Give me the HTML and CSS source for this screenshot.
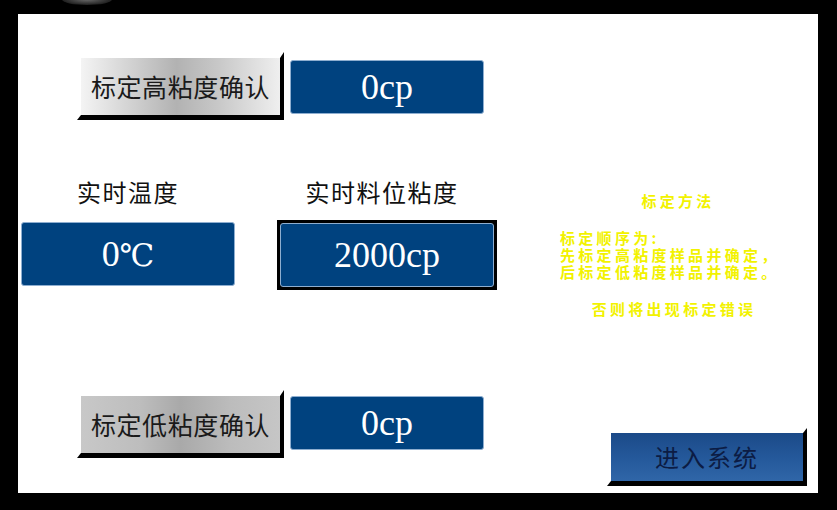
FILE: index.html
```html
<!DOCTYPE html>
<html lang="zh-CN">
<head>
<meta charset="utf-8">
<title>粘度标定</title>
<link rel="stylesheet" href="styles.css">
</head>
<body>
<div class="screen">
  <div class="glare"></div>
  <div class="panel">
    <div class="row row-top">
      <div class="bevel-btn gray-hi"><span>标定高粘度确认</span></div>
      <div class="value-box small-box">0cp</div>
    </div>
    <div class="row row-mid">
      <div class="col col-temp">
        <div class="label">实时温度</div>
        <div class="value-box temp-box">0<span class="unit">℃</span></div>
      </div>
      <div class="col col-level">
        <div class="label label-level">实时料位粘度</div>
        <div class="frame"><div class="value-box level-box">2000cp</div></div>
      </div>
      <div class="notes">
        <div class="note-title">标定方法</div>
        <div class="note-lines">
          <div class="note-line">标定顺序为:</div>
          <div class="note-line">先标定高粘度样品并确定，</div>
          <div class="note-line">后标定低粘度样品并确定。</div>
        </div>
        <div class="note-warn">否则将出现标定错误</div>
      </div>
    </div>
    <div class="row row-bottom">
      <div class="bevel-btn gray-lo"><span>标定低粘度确认</span></div>
      <div class="value-box small-box box-low">0cp</div>
      <div class="bevel-btn enter-btn"><span>进入系统</span></div>
    </div>
  </div>
</div>
</body>
</html>
```
FILE: styles.css
```css
html, body {
  margin: 0;
  padding: 0;
  background: #000;
}
.screen {
  position: relative;
  width: 837px;
  height: 510px;
  background: #000;
  padding: 14px 19px 17px 18px;
  box-sizing: border-box;
  overflow: hidden;
}
.glare {
  position: absolute;
  left: 62px;
  top: -6px;
  width: 50px;
  height: 11px;
  border-radius: 50%;
  background: radial-gradient(ellipse at center, #6a6a6a 0%, #2a2a2a 60%, rgba(0,0,0,0) 100%);
}
.panel {
  width: 800px;
  height: 479px;
  background: #fff;
  display: flex;
  flex-direction: column;
  font-family: "Noto Sans CJK SC", "Noto Sans", sans-serif;
}
.row {
  display: flex;
  align-items: flex-start;
}
.row-top {
  margin-top: 38px;
  padding-left: 59px;
}
.bevel-btn {
  box-sizing: border-box;
  border-style: solid;
  border-width: 6px 4px 5px 4px;
  border-color: transparent #000 #000 transparent;
  background-clip: padding-box;
  display: flex;
  align-items: center;
  justify-content: center;
  width: 207px;
  height: 68px;
  color: #1a1a1a;
  font-size: 25px;
  letter-spacing: 0.6px;
}
.bevel-btn span {
  line-height: 1;
  margin-top: -1px;
}
.gray-hi {
  background-image: linear-gradient(to right, #f4f4f4 0%, #d2d2d2 25%, #b2b2b2 48%, #c9c9c9 70%, #efefef 100%);
}
.gray-lo {
  background-image: linear-gradient(to right, #c8c8c8 0%, #bdbdbd 30%, #a9a9a9 50%, #bcbcbc 75%, #c6c6c6 100%);
}
.value-box {
  box-sizing: border-box;
  background: #00427f;
  border: 1px solid #8eaed0;
  border-radius: 3px;
  color: #fff;
  font-family: "Liberation Serif", "DejaVu Serif", serif;
  font-size: 36px;
  display: flex;
  align-items: center;
  justify-content: center;
}
.small-box {
  width: 194px;
  height: 54px;
  margin-left: 6px;
  margin-top: 8px;
}
.row-mid {
  margin-top: 52px;
  padding-left: 3px;
}
.col {
  display: flex;
  flex-direction: column;
  align-items: center;
}
.label {
  height: 40px;
  line-height: 40px;
  font-size: 24px;
  letter-spacing: 1.5px;
  color: #111;
}
.col-temp {
  width: 214px;
}
.temp-box {
  width: 214px;
  height: 64px;
  margin-top: 10px;
}
.unit {
  font-size: 31px;
  margin-top: 2px;
}
.col-level {
  width: 220px;
  margin-left: 42px;
}
.label-level {
  margin-right: 10px;
}
.frame {
  box-sizing: border-box;
  width: 220px;
  height: 70px;
  margin-top: 8px;
  border: 3px solid #000;
  background: #000;
}
.level-box {
  width: 100%;
  height: 100%;
}
.notes {
  margin-left: 63px;
  margin-top: 20px;
  width: 240px;
  color: #f2f200;
  font-size: 15px;
  font-weight: 700;
  line-height: 17px;
  letter-spacing: 3.3px;
}
.note-title {
  text-align: center;
  width: 236px;
}
.note-lines {
  margin-top: 20px;
  white-space: nowrap;
}
.note-line {
  height: 17px;
}
.note-warn {
  margin-top: 20px;
  width: 228px;
  text-align: center;
}
.row-bottom {
  margin-top: 73px;
  padding-left: 59px;
}
.box-low {
  margin-top: 6px;
}
.enter-btn {
  margin-left: auto;
  margin-right: 11px;
  margin-top: 38px;
  width: 200px;
  height: 58px;
  border-width: 5px 4px 5px 4px;
  background-image: linear-gradient(to bottom, #1b4a88 0%, #24589a 50%, #3066a8 100%);
  color: #0c1c44;
  font-size: 24px;
  letter-spacing: 2px;
}
```
